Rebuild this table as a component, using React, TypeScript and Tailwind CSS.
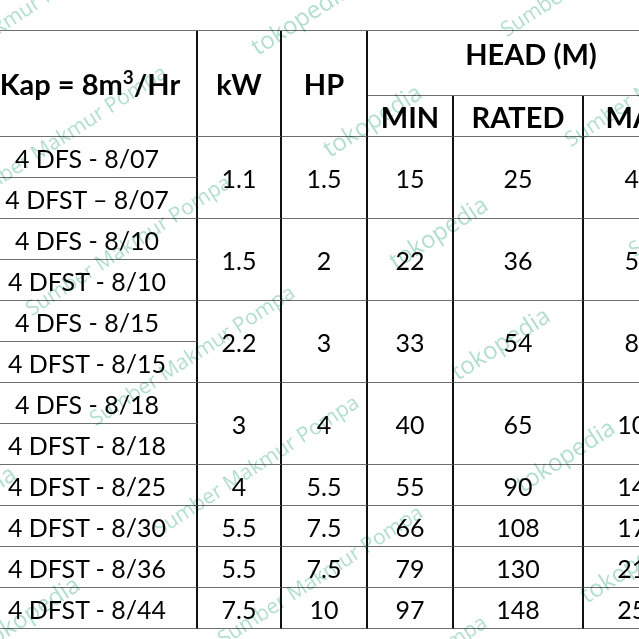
import React from "react";

interface Group {
  models: string[];
  kw: string;
  hp: string;
  min: string;
  rated: string;
  max: string;
}

const groups: Group[] = [
  { models: ["4 DFS - 8/07", "4 DFST – 8/07"], kw: "1.1", hp: "1.5", min: "15", rated: "25", max: "40" },
  { models: ["4 DFS - 8/10", "4 DFST - 8/10"], kw: "1.5", hp: "2", min: "22", rated: "36", max: "58" },
  { models: ["4 DFS - 8/15", "4 DFST - 8/15"], kw: "2.2", hp: "3", min: "33", rated: "54", max: "87" },
  { models: ["4 DFS - 8/18", "4 DFST - 8/18"], kw: "3", hp: "4", min: "40", rated: "65", max: "105" },
  { models: ["4 DFST - 8/25"], kw: "4", hp: "5.5", min: "55", rated: "90", max: "145" },
  { models: ["4 DFST - 8/30"], kw: "5.5", hp: "7.5", min: "66", rated: "108", max: "175" },
  { models: ["4 DFST - 8/36"], kw: "5.5", hp: "7.5", min: "79", rated: "130", max: "210" },
  { models: ["4 DFST - 8/44"], kw: "7.5", hp: "10", min: "97", rated: "148", max: "252" },
];

// watermark centres, [x, y]
const sumber: [number, number][] = [
  [0, 25],
  [64, 135],
  [128, 245],
  [192, 355],
  [256, 465],
  [320, 575],
  [384, 685],
  [603, -34],
  [667, 76],
  [731, 186],
];

const toko: [number, number][] = [
  [300, 18],
  [372, 120],
  [438, 232],
  [500, 343],
  [565, 455],
  [629, 566],
  [30, 612],
  [-34, 501],
];

const cell = "flex items-center justify-center border-r-2 border-r-[#111] border-b border-b-[#6e6e6e]";
const head = `${cell} font-bold text-[29px]`;

const App: React.FC = () => {
  return (
    <div className="relative w-[639px] h-[639px] overflow-hidden bg-white text-black font-['Lato',sans-serif]">
      <div className="pt-[30px] ml-[-22px]">
        <div className="grid w-[718px] grid-cols-[220px_84px_86px_86px_130px_112px] grid-rows-[65px_41px_repeat(12,41px)] border-t border-t-[#6e6e6e]">
          <div className={`${head} row-span-2 pl-[6px]`}>
            <span>
              Kap = 8m<sup className="text-[19px] -top-[11px]">3</sup>/Hr
            </span>
          </div>
          <div className={`${head} row-span-2`}>kW</div>
          <div className={`${head} row-span-2`}>HP</div>
          <div className={`${head} col-span-3 !items-start pt-[1px]`}>HEAD (M)</div>
          <div className={`${head} pt-[2px]`}>MIN</div>
          <div className={`${head} pt-[2px]`}>RATED</div>
          <div className={`${head} pt-[2px]`}>MAX</div>

          {groups.map((g) => {
            const span = g.models.length === 2 ? "row-span-2" : "";
            const c = `${cell} text-[25px] pt-[3px] ${span}`;
            return (
              <React.Fragment key={g.models[0]}>
                <div className={`${cell} text-[25px] pt-[3px]`}>{g.models[0]}</div>
                <div className={c}>{g.kw}</div>
                <div className={c}>{g.hp}</div>
                <div className={c}>{g.min}</div>
                <div className={c}>{g.rated}</div>
                <div className={c}>{g.max}</div>
                {g.models[1] && <div className={`${cell} text-[25px] pt-[3px]`}>{g.models[1]}</div>}
              </React.Fragment>
            );
          })}
        </div>
      </div>

      <div className="pointer-events-none absolute inset-0 font-['Open_Sans',sans-serif] text-[#b2ded0] mix-blend-multiply">
        {sumber.map(([x, y]) => (
          <div
            key={`s${x}${y}`}
            className="absolute whitespace-nowrap text-[21px] leading-none -translate-x-1/2 -translate-y-1/2 -rotate-[33deg]"
            style={{ left: x, top: y }}
          >
            Sumber Makmur Pompa
          </div>
        ))}
        {toko.map(([x, y]) => (
          <div
            key={`t${x}${y}`}
            className="absolute whitespace-nowrap text-[24px] leading-none -translate-x-1/2 -translate-y-1/2 -rotate-[33deg]"
            style={{ left: x, top: y }}
          >
            tokopedia
          </div>
        ))}
      </div>
    </div>
  );
};

export default App;
